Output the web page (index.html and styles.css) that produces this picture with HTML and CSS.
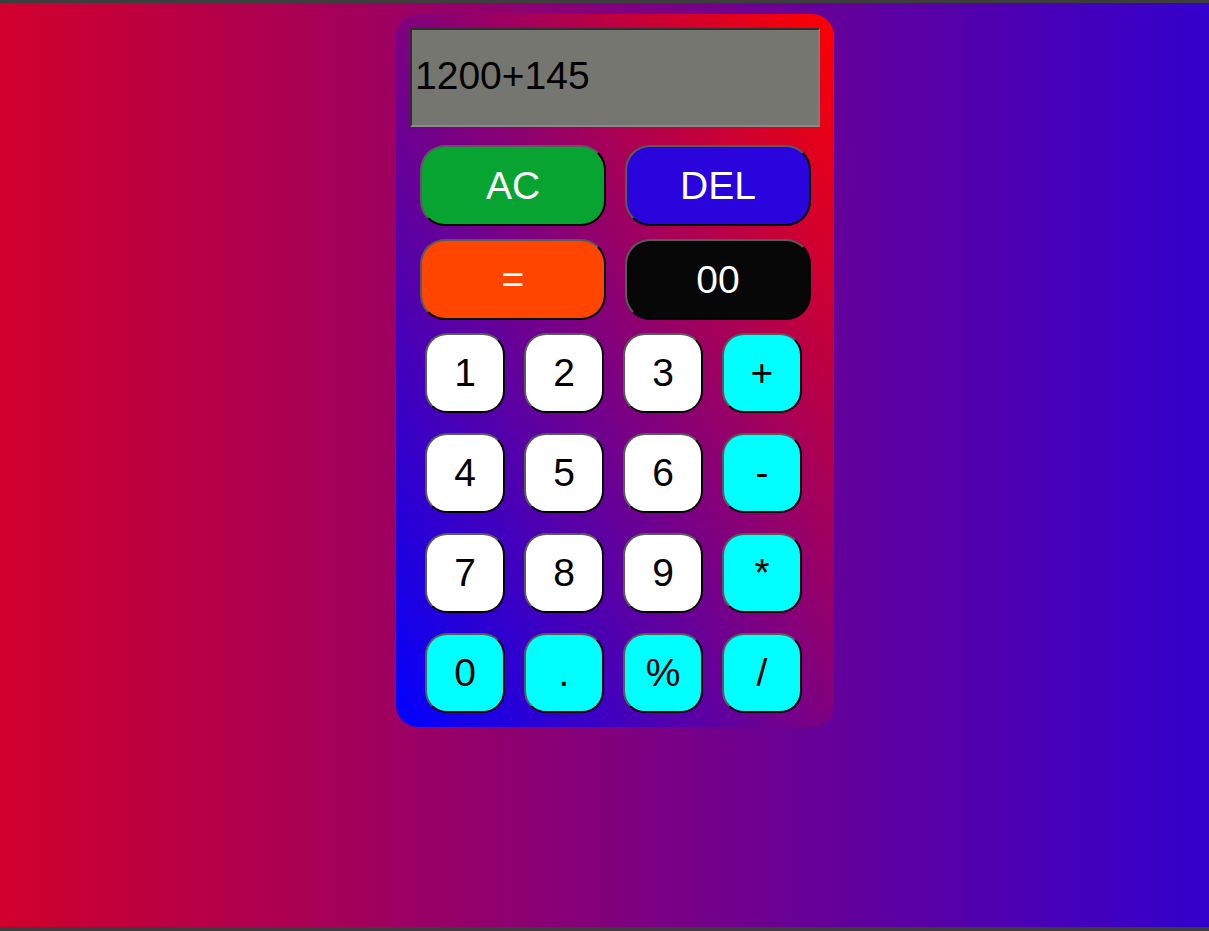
FILE: index.html
```html
<!DOCTYPE html>
<html>
<head>
<meta charset="utf-8">
<title>Calculator</title>
<link rel="stylesheet" href="styles.css">
</head>
<body>
<div class="page">
  <div class="calc">
    <div class="display">1200+145</div>
    <div class="wide-row">
      <button class="btn wide ac">AC</button>
      <button class="btn wide del">DEL</button>
    </div>
    <div class="wide-row">
      <button class="btn wide eq">=</button>
      <button class="btn wide dz">00</button>
    </div>
    <div class="keys">
      <button class="btn key">1</button>
      <button class="btn key">2</button>
      <button class="btn key">3</button>
      <button class="btn key op">+</button>
      <button class="btn key">4</button>
      <button class="btn key">5</button>
      <button class="btn key">6</button>
      <button class="btn key op">-</button>
      <button class="btn key">7</button>
      <button class="btn key">8</button>
      <button class="btn key">9</button>
      <button class="btn key op">*</button>
      <button class="btn key op">0</button>
      <button class="btn key op">.</button>
      <button class="btn key op">%</button>
      <button class="btn key op">/</button>
    </div>
  </div>
</div>
</body>
</html>
```
FILE: styles.css
```css
html {
  background: #3d3d3d;
}
body {
  margin: 0;
  font-family: "Liberation Sans", Arial, sans-serif;
}
.page {
  margin-top: 3px;
  height: 924px;
  background: linear-gradient(to right, #d1002c, #3300cc);
  padding-top: 11px;
  box-sizing: border-box;
}
.calc {
  margin-left: 396px;
  width: 438px;
  height: 713px;
  box-sizing: border-box;
  padding: 14px;
  border-radius: 22px;
  background: linear-gradient(to top right, #0000ff, #ff0000);
}
.display {
  box-sizing: border-box;
  width: 410px;
  height: 99px;
  background: #767671;
  border: 2px solid;
  border-color: #2e2e2e #7c7c7c #8a8a8a #2e2e2e;
  display: flex;
  align-items: center;
  padding: 0 0 3px 3px;
  font-size: 39px;
  color: #000;
}
.wide-row {
  display: flex;
  gap: 19px;
  padding-left: 10px;
  margin-top: 18px;
}
.wide-row + .wide-row {
  margin-top: 13px;
}
.btn {
  box-sizing: border-box;
  font-family: "Liberation Sans", Arial, sans-serif;
  font-size: 39px;
  border: 2px solid;
  border-color: #5a5a5a #000 #000 #5a5a5a;
  padding: 0;
  margin: 0;
  display: flex;
  align-items: center;
  justify-content: center;
}
.wide {
  width: 186px;
  height: 81px;
  border-radius: 25px;
  color: #fff;
}
.ac { background: #08a432; }
.del { background: #2904dc; }
.eq { background: #ff4500; }
.dz { background: #070707; }
.keys {
  display: grid;
  grid-template-columns: repeat(4, 80px);
  grid-auto-rows: 80px;
  column-gap: 19px;
  row-gap: 20px;
  padding-left: 15px;
  margin-top: 13px;
}
.key {
  width: 80px;
  height: 80px;
  border-radius: 22px;
  background: #fff;
  color: #000;
}
.op {
  background: #00ffff;
}
```
